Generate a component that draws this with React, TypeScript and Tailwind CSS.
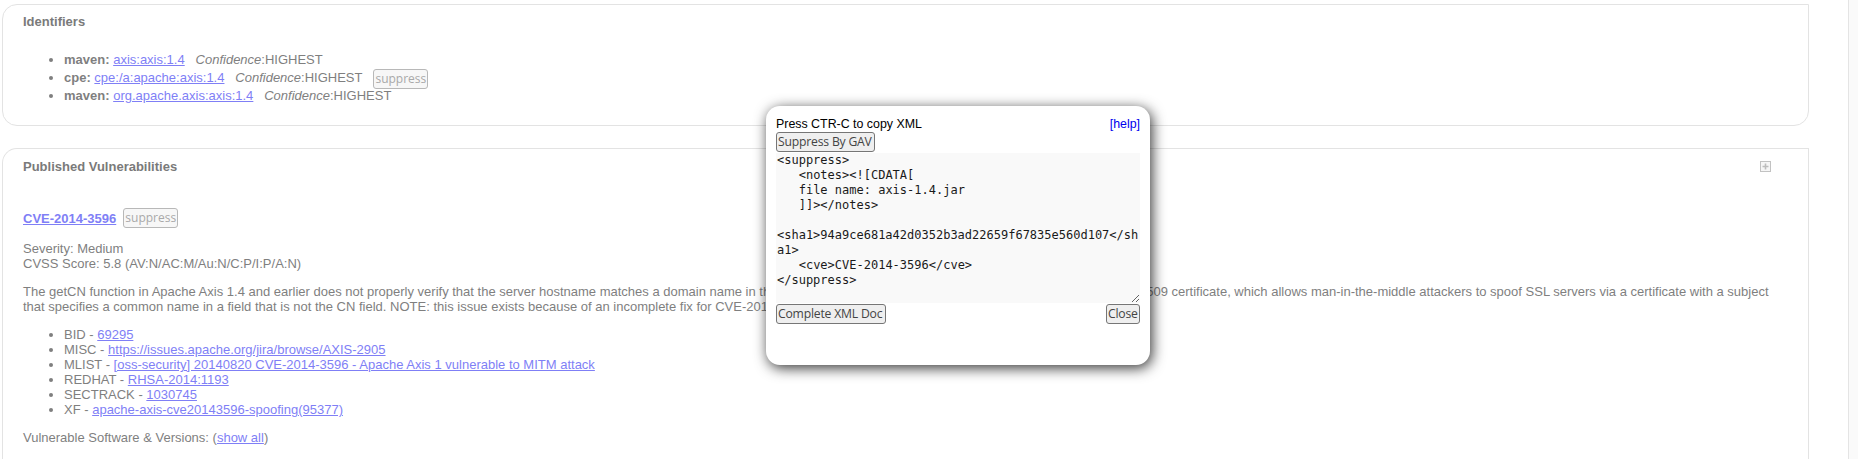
import React from "react";

const link = "text-[#7f7ff6] underline";

function SuppressBtn({ middle }: { middle?: boolean }) {
  return (
    <button
      className={`inline-flex h-[20px] w-[55px] items-center justify-center rounded-[3px] border border-[#b8b8b8] bg-[#f7f7f7] px-[2px] font-['Open_Sans',sans-serif] text-[12px] leading-[16px] text-[#a9a9a9] ${middle ? "align-middle" : ""}`}
    >
      suppress
    </button>
  );
}

function ModalBtn({ label, w }: { label: string; w: string }) {
  return (
    <button
      className={`h-[20px] ${w} overflow-hidden whitespace-nowrap rounded-[3px] border border-[#767676] bg-[#efefef] px-[1px] text-left font-['Open_Sans',sans-serif] text-[12.2px] leading-[16px] tracking-[-0.2px] text-[#444]`}
    >
      {label}
    </button>
  );
}

const xml = `<suppress>
   <notes><![CDATA[
   file name: axis-1.4.jar
   ]]></notes>

<sha1>94a9ce681a42d0352b3ad22659f67835e560d107</sha1>
   <cve>CVE-2014-3596</cve>
</suppress>`;

export default function App() {
  return (
    <div className="relative flex h-[459px] w-[1858px] overflow-hidden bg-white font-['Liberation_Sans',Arial,sans-serif] text-[13px] leading-[15px] text-[#7f7f7f]">
      <div className="flex w-[1848px] flex-col gap-[22px] pl-[2px] pt-[4px]">
        {/* Identifiers card */}
        <section className="w-[1807px] rounded-tl-[15px] rounded-bl-[15px] rounded-br-[15px] border border-[#e3e3e3] pl-[20px] pr-[22px] pt-[9px] pb-[22px]">
          <h3 className="font-bold text-[#7a7a7a]">Identifiers</h3>
          <ul className="mt-[23px] list-disc pl-[41px]">
            <li className="h-[15px]">
              <b>maven:</b> <a className={link}>axis:axis:1.4</a>
              {"\u00a0\u00a0 "}
              <i>Confidence</i>:HIGHEST
            </li>
            <li className="h-[21px] leading-[21px]">
              <b>cpe:</b> <a className={link}>cpe:/a:apache:axis:1.4</a>
              {"\u00a0\u00a0 "}
              <i>Confidence</i>:HIGHEST{"\u00a0\u00a0 "}
              <SuppressBtn middle />
            </li>
            <li className="h-[15px]">
              <b>maven:</b> <a className={link}>org.apache.axis:axis:1.4</a>
              {"\u00a0\u00a0 "}
              <i>Confidence</i>:HIGHEST
            </li>
          </ul>
        </section>

        {/* Published Vulnerabilities card */}
        <section className="w-[1807px] flex-1 rounded-tl-[15px] border border-b-0 border-[#e3e3e3] pl-[20px] pr-[22px] pt-[10px]">
          <div className="flex items-center justify-between">
            <h3 className="font-bold text-[#7a7a7a]">Published Vulnerabilities</h3>
            <svg width="11" height="11" viewBox="0 0 11 11" className="mr-[15px]">
              <rect x="0.5" y="0.5" width="10" height="10" fill="#f6f6f6" stroke="#c2c2c2" />
              <path d="M5.5 2.5V8.5M2.5 5.5H8.5" stroke="#bdbdbd" strokeWidth="1.6" />
            </svg>
          </div>
          <div className="mt-[34px] flex h-[20px] items-center gap-[7px]">
            <a className={`${link} font-bold`}>CVE-2014-3596</a>
            <SuppressBtn />
          </div>
          <p className="mt-[13px]">
            Severity: Medium
            <br />
            CVSS Score: 5.8 (AV:N/AC:M/Au:N/C:P/I:P/A:N)
          </p>
          <p className="mt-[13px]">
            The getCN function in Apache Axis 1.4 and earlier does not properly verify that the server hostname matches a domain name in
            the subject's Common Name (CN) or subjectAltName field of the X.509 certificate, which allows man-in-the-middle attackers to
            spoof SSL servers via a certificate with a subject that specifies a common name in a field that is not the CN field. NOTE:
            this issue exists because of an incomplete fix for CVE-2012-5784.
          </p>
          <ul className="mt-[13px] list-disc pl-[41px]">
            <li>
              BID - <a className={link}>69295</a>
            </li>
            <li>
              MISC - <a className={link}>https://issues.apache.org/jira/browse/AXIS-2905</a>
            </li>
            <li>
              MLIST - <a className={link}>[oss-security] 20140820 CVE-2014-3596 - Apache Axis 1 vulnerable to MITM attack</a>
            </li>
            <li>
              REDHAT - <a className={link}>RHSA-2014:1193</a>
            </li>
            <li>
              SECTRACK - <a className={link}>1030745</a>
            </li>
            <li>
              XF - <a className={link}>apache-axis-cve20143596-spoofing(95377)</a>
            </li>
          </ul>
          <p className="mt-[13px]">
            Vulnerable Software &amp; Versions: (<a className={link}>show all</a>)
          </p>
        </section>
      </div>
      <div className="flex-1 border-l border-[#e4e4e4] bg-[#fafafa]" />

      {/* Modal */}
      <div className="absolute left-[766px] top-[106px] h-[259px] w-[384px] rounded-[14px] bg-white px-[10px] pt-[11px] shadow-[2px_3px_14px_rgba(0,0,0,0.8)]">
        <div className="flex items-center justify-between text-[12.4px] leading-[15px] text-black">
          <span>Press CTR-C to copy XML</span>
          <a className="text-[#0000ee]">[help]</a>
        </div>
        <ModalBtn label="Suppress By GAV" w="w-[99px]" />
        <textarea
          readOnly
          defaultValue={xml}
          className="mt-[1px] block h-[150px] w-[364px] resize border-0 bg-[#f9f9f9] px-[1px] py-[0px] font-['DejaVu_Sans_Mono',monospace] text-[12px] leading-[15px] text-[#1a1a1a] outline-none"
        />
        <div className="mt-[1px] flex justify-between">
          <ModalBtn label="Complete XML Doc" w="w-[110px]" />
          <ModalBtn label="Close" w="w-[34px]" />
        </div>
      </div>
    </div>
  );
}
